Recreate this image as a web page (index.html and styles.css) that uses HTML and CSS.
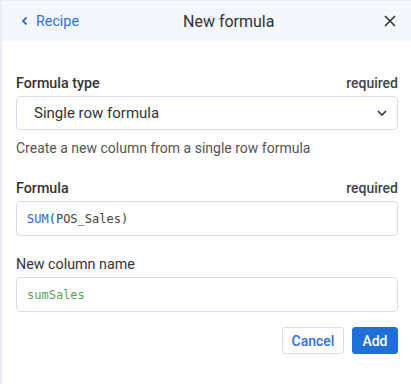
FILE: index.html
```html
<!DOCTYPE html>
<html lang="en">
<head>
    <meta charset="UTF-8">
    <meta name="viewport" content="width=device-width, initial-scale=1.0">
    <title>New formula</title>
    <link rel="stylesheet" href="styles.css">
</head>
<body>
    <div class="panel">
        <div class="panel-header">
            <a class="back-link" href="#">
                <svg width="8" height="10" viewBox="0 0 8 10"><path d="M5.5 1.5 L2 5 L5.5 8.5" fill="none" stroke="#2f6fd6" stroke-width="1.8"/></svg>
                Recipe
            </a>
            <div class="panel-title">New formula</div>
            <button class="close-button" aria-label="Close">
                <svg width="12" height="12" viewBox="0 0 12 12"><path d="M1 1 L11 11 M11 1 L1 11" stroke="#333" stroke-width="1.6"/></svg>
            </button>
        </div>

        <div class="panel-body">
            <!-- Formula type -->
            <div class="field field-spaced">
                <div class="field-label">
                    <span class="label-strong">Formula type</span>
                    <span class="required">required</span>
                </div>
                <div class="select-box">
                    <span>Single row formula</span>
                    <svg width="10" height="6" viewBox="0 0 10 6"><path d="M1 1 L5 5 L9 1" fill="none" stroke="#333" stroke-width="1.6"/></svg>
                </div>
                <div class="help-text">Create a new column from a single row formula</div>
            </div>

            <!-- Formula -->
            <div class="field">
                <div class="field-label">
                    <span class="label-strong">Formula</span>
                    <span class="required">required</span>
                </div>
                <div class="code-input"><span class="fn">SUM</span>(POS_Sales)</div>
            </div>

            <!-- Column name -->
            <div class="field">
                <div class="field-label">
                    <span>New column name</span>
                </div>
                <div class="code-input name">sumSales</div>
            </div>

            <div class="actions">
                <button class="btn">Cancel</button>
                <button class="btn btn-primary">Add</button>
            </div>
        </div>
    </div>
</body>
</html>
```

FILE: styles.css
```css
body {
    margin: 0;
    font-family: Roboto, "Noto Sans", sans-serif;
    background: #fff;
    color: #333;
}

.panel {
    border-top: 1px solid #e9edf3;
    border-left: 2px solid #e9eef6;
    height: 384px;
    box-sizing: border-box;
}

.panel-header {
    display: flex;
    align-items: center;
    height: 40px;
    padding: 0 15px 0 19px;
    background: #f4f7fb;
}

.back-link {
    display: flex;
    align-items: center;
    gap: 7px;
    color: #2f6fd6;
    text-decoration: none;
    font-size: 14.3px;
    width: 162px;
}

.panel-title {
    flex: 1;
    font-size: 16px;
    color: #333;
}

.close-button {
    border: none;
    background: none;
    padding: 0;
    display: flex;
    cursor: pointer;
}

.panel-body {
    padding: 34px 13px 0 14px;
}

.field {
    margin-bottom: 20px;
}

.field-spaced {
    margin-bottom: 24px;
}

.field-label {
    display: flex;
    justify-content: space-between;
    align-items: baseline;
    font-size: 14.3px;
    margin-bottom: 5px;
    color: #333;
}

.label-strong {
    font-weight: 500;
}

.required {
    font-weight: 500;
    color: #444;
    font-size: 14px;
}

.select-box {
    display: flex;
    align-items: center;
    justify-content: space-between;
    height: 34px;
    box-sizing: border-box;
    padding: 0 10px 0 17px;
    border: 1px solid #d6dee9;
    border-radius: 4px;
    font-size: 15px;
    color: #333;
}

.help-text {
    margin-top: 10px;
    font-size: 14px;
    color: #555;
}

.code-input {
    display: flex;
    align-items: center;
    height: 35px;
    box-sizing: border-box;
    padding: 0 10px;
    border: 1px solid #d6dee9;
    border-radius: 4px;
    font-family: "DejaVu Sans Mono", "Liberation Mono", monospace;
    font-size: 12px;
    color: #444;
}

.code-input .fn {
    color: #2f63c9;
}

.code-input.name {
    color: #5aa35a;
}

.actions {
    display: flex;
    justify-content: flex-end;
    gap: 8px;
    margin-top: -5px;
}

.btn {
    height: 27px;
    padding: 0 8.5px;
    border: 1px solid #d6dee9;
    border-radius: 3px;
    background: #fff;
    color: #2f6fd6;
    font-family: Roboto, sans-serif;
    font-size: 14px;
    font-weight: 500;
    cursor: pointer;
}

.btn-primary {
    background: #1f6fd8;
    border-color: #1f6fd8;
    color: #fff;
    padding: 0 9.5px;
}
```
